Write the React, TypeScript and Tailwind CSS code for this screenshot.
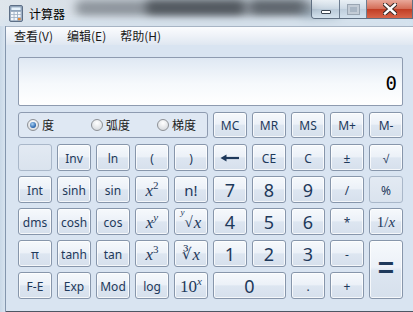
import React from 'react';

type BtnProps = {
  children?: React.ReactNode;
  className?: string;
  flat?: boolean;
};

const Btn: React.FC<BtnProps> = ({ children, className = '', flat }) => (
  <button
    className={`rounded-[3px] border flex items-center justify-center text-[#1e395b] leading-none ${
      flat
        ? 'border-[#a9b7c9] bg-[linear-gradient(#e3eaf3,#dae3ee)]'
        : 'border-[#8796ab] bg-[linear-gradient(#f6f9fc,#ecf1f8_46%,#dde6f1_52%,#d6e0ec)] shadow-[inset_0_0_0_1px_rgba(255,255,255,0.75)]'
    } ${className}`}
  >
    {children}
  </button>
);

const Fn: React.FC<{ label: string; flat?: boolean }> = ({ label, flat }) => (
  <Btn flat={flat} className="text-[12px] font-['Noto_Sans',sans-serif] pt-[2px]">
    {label}
  </Btn>
);

const Digit: React.FC<{ label: string; className?: string }> = ({ label, className = '' }) => (
  <Btn className={`text-[18px] font-['Noto_Sans',sans-serif] ${className}`}>{label}</Btn>
);

const Math: React.FC<{ children: React.ReactNode }> = ({ children }) => (
  <Btn className="text-[17px] font-['Liberation_Serif','DejaVu_Serif',serif] pt-[2px]">{children}</Btn>
);

const Radio: React.FC<{ checked?: boolean; label: string; className?: string }> = ({ checked, label, className = '' }) => (
  <div className={`flex items-center gap-[3px] ${className}`}>
    <span className="w-[12px] h-[12px] rounded-full border border-[#8e9196] bg-[radial-gradient(circle_at_50%_30%,#ffffff,#cfd3d8)] flex items-center justify-center">
      {checked && (
        <span className="w-[6px] h-[6px] rounded-full bg-[radial-gradient(circle_at_40%_35%,#a9d2f5,#1c5aa5_75%)]" />
      )}
    </span>
    <span className="text-[12px] text-[#1a1a1a] font-['Noto_Sans_CJK_SC',sans-serif] leading-none">{label}</span>
  </div>
);

const CalcIcon = () => (
  <svg width="16" height="17" viewBox="0 0 16 17">
    <rect x="1.5" y="0.5" width="13" height="16" rx="1.5" fill="#9fb0c4" stroke="#5d6f86" />
    <rect x="3" y="2" width="10" height="3.5" fill="#e6f2fb" stroke="#6f87a3" strokeWidth="0.6" />
    {[0, 1, 2].map((r) =>
      [0, 1, 2].map((c) => (
        <rect key={`${r}-${c}`} x={3 + c * 3.5} y={7 + r * 3} width="2.6" height="2.2" fill={c === 2 && r === 2 ? '#e58a3a' : '#f4f7fb'} />
      ))
    )}
  </svg>
);

const TitleBar = () => (
  <div className="relative h-[26px] overflow-hidden bg-[linear-gradient(90deg,#dfe6ec,#d3dbe3_30%,#c9d3dc_60%,#d6e2ec_80%,#cfe0ee)]">
    <div className="absolute left-[75px] top-[0px] w-[240px] h-[16px] rounded-[8px] bg-[#7a8189] opacity-80 blur-[5px]" />
    <div className="absolute left-[145px] top-[0px] w-[100px] h-[15px] rounded-[8px] bg-[#3a4046] opacity-75 blur-[5px]" />
    <div className="absolute left-[250px] top-[0px] w-[55px] h-[14px] rounded-[8px] bg-[#464d54] opacity-70 blur-[5px]" />
    <div className="absolute left-[300px] top-[10px] w-[40px] h-[14px] rounded-full bg-[#5e7a90] opacity-40 blur-[6px]" />
    <div className="absolute left-0 right-0 top-[19px] h-[12px] bg-[#d7e3ee] opacity-85 blur-[3px]" />
    <div className="relative flex items-start h-full">
      <div className="flex items-center gap-[5px] pl-[8px] pt-[5px]">
        <CalcIcon />
        <span className="text-[12px] text-black font-['Noto_Sans_CJK_SC',sans-serif] leading-none">计算器</span>
      </div>
      <div className="ml-auto flex h-[19px] rounded-bl-[4px] overflow-hidden border border-t-0 border-[#5f6f82]">
        <div className="w-[28px] flex items-end justify-center pb-[4px] bg-[linear-gradient(#eef3f7cc,#c9d6e2aa_50%,#b5c6d6aa_51%,#d4e2ee)] border-r border-[#6d7d90]">
          <span className="w-[10px] h-[4px] bg-white border border-[#3c4652] rounded-[1px]" />
        </div>
        <div className="w-[27px] flex items-center justify-center bg-[linear-gradient(#eef3f7cc,#c9d6e2aa_50%,#b5c6d6aa_51%,#d4e2ee)] border-r border-[#6d7d90]">
          <span className="w-[11px] h-[9px] border-[2px] border-[#c3ccd6] bg-[#a9b6c4] outline outline-1 outline-[#9aa6b3]" />
        </div>
        <div className="w-[45px] flex items-center justify-center bg-[linear-gradient(#e9a89a,#d46e58_48%,#c13e25_52%,#d7654a)]">
          <svg width="14" height="12" viewBox="0 0 14 12">
            <path d="M2 1.5 L12 10.5 M12 1.5 L2 10.5" stroke="#3a2a28" strokeWidth="4.4" strokeLinecap="square" />
            <path d="M2 1.5 L12 10.5 M12 1.5 L2 10.5" stroke="#ffffff" strokeWidth="2.4" strokeLinecap="square" />
          </svg>
        </div>
      </div>
    </div>
  </div>
);

const App: React.FC = () => {
  return (
    <div className="w-[413px] h-[312px] flex flex-col overflow-hidden bg-[#cddbe9]">
      <TitleBar />
      <div className="flex flex-1 min-h-0">
        <div className="w-[5px] bg-[linear-gradient(90deg,#c9d8e7,#d7e3ef)]" />
        <div className="flex-1 flex flex-col border-l border-[#8496ad]">
          <div className="h-[19px] flex items-center gap-[14px] pl-[8px] border-t border-[#a7b4c4] bg-[linear-gradient(#fbfcfe,#eef2f8_50%,#dfe7f1)] text-[12px] text-[#1a1a1a] font-['Noto_Sans_CJK_SC',sans-serif] leading-none">
            <span>查看(V)</span>
            <span>编辑(E)</span>
            <span>帮助(H)</span>
          </div>
          <div className="flex-1 bg-[#d9e4f1] pl-[12px] pt-[12px] border-b border-[#4d5764]">
            <div className="w-[385px] h-[49px] rounded-[2px] border border-[#8e9bb0] bg-[linear-gradient(#dfe8f3,#f6f9fc_55%,#ffffff)] flex items-end justify-end pr-[5px] pb-[12px]">
              <span className="text-[19px] leading-none text-black font-['DejaVu_Sans_Mono',monospace]">0</span>
            </div>
            <div className="mt-[6px] flex gap-[5px] h-[26px]">
              <div className="w-[190px] rounded-[3px] border border-[#8e9bb0] bg-[#dfe8f3] flex items-center pl-[8px]">
                <Radio checked label="度" className="w-[64px]" />
                <Radio label="弧度" className="w-[66px]" />
                <Radio label="梯度" />
              </div>
              {['MC', 'MR', 'MS', 'M+', 'M-'].map((m) => (
                <div key={m} className="w-[34px] flex">
                  <Btn className="flex-1 text-[12px] font-['Noto_Sans',sans-serif] pt-[1px]">{m}</Btn>
                </div>
              ))}
            </div>
            <div className="mt-[6px] grid grid-cols-[repeat(10,34px)] grid-rows-[repeat(5,27px)] gap-[5px]">
              <Fn label="" flat />
              <Fn label="Inv" />
              <Fn label="ln" />
              <Fn label="(" />
              <Fn label=")" />
              <Btn>
                <svg width="20" height="8" viewBox="0 0 20 8">
                  <path d="M5 4 H19" stroke="#1e395b" strokeWidth="2.2" />
                  <path d="M0.5 4 L6.5 0.5 L6.5 7.5 Z" fill="#1e395b" />
                </svg>
              </Btn>
              <Fn label="CE" />
              <Fn label="C" />
              <Fn label="±" />
              <Fn label="√" />

              <Fn label="Int" />
              <Fn label="sinh" />
              <Fn label="sin" />
              <Math>
                <i>x</i>
                <sup className="text-[11px] not-italic">2</sup>
              </Math>
              <Btn className="text-[15px] font-['Noto_Sans',sans-serif] pt-[1px]">n!</Btn>
              <Digit label="7" />
              <Digit label="8" />
              <Digit label="9" />
              <Fn label="/" />
              <Fn label="%" flat />

              <Fn label="dms" />
              <Fn label="cosh" />
              <Fn label="cos" />
              <Math>
                <i>x</i>
                <sup className="text-[11px]">
                  <i>y</i>
                </sup>
              </Math>
              <Math>
                <sup className="text-[9px] self-start mt-[5px]">
                  <i>y</i>
                </sup>
                <span className="text-[15px]">√</span>
                <i className="ml-[1px]">x</i>
              </Math>
              <Digit label="4" />
              <Digit label="5" />
              <Digit label="6" />
              <Fn label="*" />
              <Btn className="text-[15px] font-['Liberation_Serif',serif] pt-[1px]">
                1/<i>x</i>
              </Btn>

              <Fn label="π" />
              <Fn label="tanh" />
              <Fn label="tan" />
              <Math>
                <i>x</i>
                <sup className="text-[11px]">3</sup>
              </Math>
              <Math>
                <span className="text-[15px] font-['DejaVu_Serif',serif]">∛</span>
                <i className="ml-[1px]">x</i>
              </Math>
              <Digit label="1" />
              <Digit label="2" />
              <Digit label="3" />
              <Fn label="-" />
              <Btn className="row-span-2 text-[28px] font-bold font-['Liberation_Sans',sans-serif] pb-[4px]">=</Btn>

              <Fn label="F-E" />
              <Fn label="Exp" />
              <Fn label="Mod" />
              <Fn label="log" />
              <Math>
                10
                <sup className="text-[11px]">
                  <i>x</i>
                </sup>
              </Math>
              <Digit label="0" className="col-span-2" />
              <Fn label="." />
              <Fn label="+" />
            </div>
          </div>
        </div>
      </div>
    </div>
  );
};

export default App;
